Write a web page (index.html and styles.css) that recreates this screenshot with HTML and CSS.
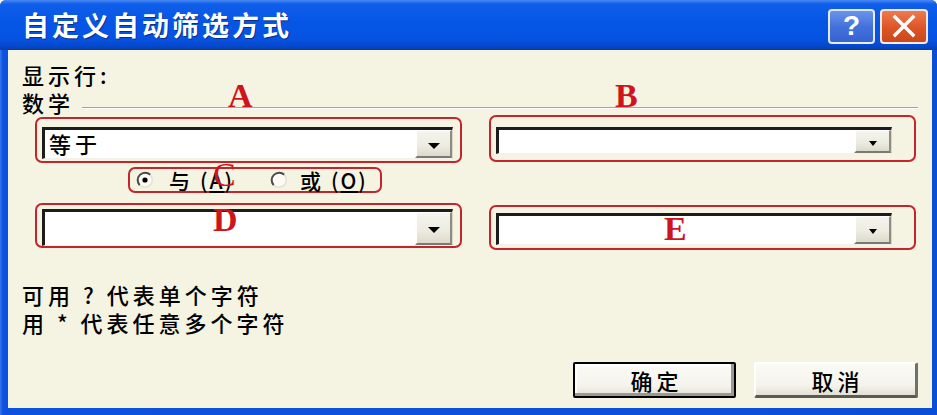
FILE: index.html
```html
<!DOCTYPE html>
<html lang="zh-CN">
<head>
<meta charset="utf-8">
<title>自定义自动筛选方式</title>
<link rel="stylesheet" href="styles.css">
</head>
<body>
<div class="window">
  <div class="titlebar">
    <span class="title">自定义自动筛选方式</span>
    <div class="tb-buttons">
      <span class="tb-btn help">?</span>
      <span class="tb-btn close">
        <svg width="26" height="24" viewBox="0 0 26 24"><path d="M4 3 L22 21 M22 3 L4 21" stroke="#fff" stroke-width="3.4" stroke-linecap="square"/></svg>
      </span>
    </div>
  </div>
  <div class="client">
    <div class="label">显示行:</div>
    <div class="field-row"><span>数学</span><span class="groove"></span></div>

    <div class="grid row1">
      <div class="redbox box-a">
        <div class="combo"><span class="val">等于</span><span class="drop"><i class="arrow"></i></span></div>
      </div>
      <div class="redbox box-b">
        <div class="combo combo-narrow"><span class="val"></span><span class="drop"><i class="arrow small"></i></span></div>
      </div>
    </div>

    <div class="redbox radios">
      <span class="opt">
        <svg class="radio-ico" width="18" height="18" viewBox="0 0 18 18"><circle cx="9" cy="9" r="7.5" fill="#fbfaf4"/><path d="M3.7 14.3 A7.5 7.5 0 0 1 14.3 3.7" stroke="#4a4a4a" stroke-width="2" fill="none"/><path d="M14.3 3.7 A7.5 7.5 0 0 1 3.7 14.3" stroke="#e4e2d2" stroke-width="1.5" fill="none"/><circle cx="9" cy="9" r="2.6" fill="#000"/></svg>
        <span class="opt-text">与</span><span class="mn">(<u>A</u>)</span>
      </span>
      <span class="opt opt2">
        <svg class="radio-ico" width="18" height="18" viewBox="0 0 18 18"><circle cx="9" cy="9" r="7.5" fill="#fbfaf4"/><path d="M3.7 14.3 A7.5 7.5 0 0 1 14.3 3.7" stroke="#4a4a4a" stroke-width="2" fill="none"/><path d="M14.3 3.7 A7.5 7.5 0 0 1 3.7 14.3" stroke="#e4e2d2" stroke-width="1.5" fill="none"/></svg>
        <span class="opt-text">或</span><span class="mn">(<u>O</u>)</span>
      </span>
    </div>

    <div class="grid row2">
      <div class="redbox box-d">
        <div class="combo combo-tall"><span class="val"></span><span class="drop"><i class="arrow"></i></span></div>
      </div>
      <div class="redbox box-e">
        <div class="combo combo-narrow"><span class="val"></span><span class="drop"><i class="arrow small"></i></span></div>
      </div>
    </div>

    <div class="hints">
      <p>可用 ? 代表单个字符</p>
      <p>用 * 代表任意多个字符</p>
    </div>

    <div class="actions">
      <button class="btn btn-default">确定</button>
      <button class="btn">取消</button>
    </div>
  </div>

  <span class="mark mark-a">A</span>
  <span class="mark mark-b">B</span>
  <span class="mark mark-c">C</span>
  <span class="mark mark-d">D</span>
  <span class="mark mark-e">E</span>
</div>
</body>
</html>
```
FILE: styles.css
```css
* { box-sizing: border-box; }

html, body {
  margin: 0;
  background: #ffffff;
}

body {
  width: 937px;
  height: 415px;
  overflow: hidden;
  font-family: "Noto Sans CJK SC", "Noto Sans", sans-serif;
}

.window {
  position: relative;
  width: 937px;
  height: 415px;
  display: flex;
  flex-direction: column;
  background: linear-gradient(90deg, #3a76ec 0, #0c52e0 3px, #0a4ed8 100%);
  border-radius: 6px 6px 0 0;
  overflow: hidden;
}

/* ---------- title bar ---------- */
.titlebar {
  height: 50px;
  flex: none;
  display: flex;
  align-items: center;
  justify-content: space-between;
  padding: 0 9px 0 22px;
  background: linear-gradient(180deg, #4a8af2 0, #0f5eea 8%, #0656e6 45%, #0552e0 80%, #0546c8 94%, #0a3aa6 100%);
}

.title {
  color: #ffffff;
  font-size: 27px;
  font-weight: 700;
  letter-spacing: 3px;
  line-height: 50px;
  text-shadow: 1px 1px 0 #0a2c8c;
}

.tb-buttons {
  display: flex;
  gap: 5px;
  margin-top: 2px;
}

.tb-btn {
  width: 47px;
  height: 35px;
  border: 2px solid rgba(255, 255, 255, 0.85);
  border-radius: 4px;
  display: flex;
  align-items: center;
  justify-content: center;
}

.help {
  background: linear-gradient(180deg, #6a94ea 0, #4472dc 50%, #3562d0 100%);
  color: #ffffff;
  font-family: "Liberation Sans", sans-serif;
  font-weight: 700;
  font-size: 28px;
  line-height: 1;
}

.close {
  background: linear-gradient(180deg, #ee7a4e 0, #dc5526 55%, #c9471d 100%);
  width: 48px;
}

/* ---------- client area ---------- */
.client {
  flex: 1;
  margin: 0 5px 7px 8px;
  background: #f5f3e1;
  display: flex;
  flex-direction: column;
  padding: 12px 14px 10px 14px;
  font-size: 22px;
  font-weight: 500;
  letter-spacing: 4px;
  line-height: 24px;
  color: #000000;
}

.field-row {
  display: flex;
  margin-top: 4px;
}

.groove {
  flex: 1;
  height: 2px;
  margin: 17px 0 0 8px;
  border-top: 1px solid #a6a596;
  border-bottom: 1px solid #ffffff;
}

.grid {
  display: grid;
  grid-template-columns: 427px 427px;
  column-gap: 27px;
  align-items: start;
  margin-left: 13px;
}

.row1 { margin-top: 3px; }
.row2 { margin-top: 10px; }

.redbox {
  border: 2px solid #c4242b;
  border-radius: 7px;
}

.box-a { padding: 8px 7px 2px 5px; }
.box-b { padding: 10px 22px 6px 5px; margin-top: -2px; }
.box-d { padding: 4px 7px 0 5px; }
.box-e { padding: 6px 22px 3px 5px; margin-top: 2px; }

.combo {
  height: 32px;
  display: flex;
  background: #ffffff;
  border-top: 3px solid #1c1c1c;
  border-left: 3px solid #1c1c1c;
  border-right: 1px solid #d8d6c8;
  border-bottom: 1px solid #f2f1ea;
}

.combo-narrow { height: 27px; }
.box-e .combo-narrow { height: 32px; }
.combo-tall { height: 37px; }

.val {
  flex: 1;
  padding-left: 4px;
  line-height: 27px;
}

.drop {
  width: 37px;
  flex: none;
  display: flex;
  align-items: center;
  justify-content: center;
  background: linear-gradient(180deg, #f6f5ee 0, #ecebe0 60%, #dcdacb 100%);
  border-left: 2px solid #ffffff;
  border-top: 1px solid #ffffff;
  border-right: 2px solid #8e8c80;
  border-bottom: 2px solid #7c7a70;
  padding-top: 4px;
}

.arrow {
  width: 0;
  height: 0;
  border-left: 6px solid transparent;
  border-right: 6px solid transparent;
  border-top: 6px solid #000000;
}

.arrow.small {
  border-left-width: 4px;
  border-right-width: 4px;
  border-top-width: 5px;
}

/* ---------- radios ---------- */
.radios {
  align-self: flex-start;
  width: 254px;
  height: 26px;
  margin: 4px 0 0 106px;
  display: flex;
  align-items: center;
  padding-left: 6px;
  line-height: 22px;
  font-size: 21px;
}

.opt {
  display: flex;
  align-items: center;
}

.opt2 { margin-left: 36px; }

.radio-ico { margin-right: 15px; flex: none; }
.opt2 .radio-ico { margin-right: 12px; }

.mn {
  margin-left: 6px;
  letter-spacing: 2px;
}

.mn u { text-underline-offset: 2px; }

/* ---------- hints ---------- */
.hints {
  margin-top: 30px;
  line-height: 28px;
}

.hints p { margin: 0; }

/* ---------- buttons ---------- */
.actions {
  margin-top: auto;
  display: flex;
  justify-content: flex-end;
  gap: 18px;
}

.btn {
  width: 164px;
  height: 36px;
  font-family: inherit;
  font-size: 22px;
  font-weight: 500;
  letter-spacing: 4px;
  padding: 0 0 0 4px;
  color: #000000;
  background: linear-gradient(180deg, #fbfbf6 0, #f4f3ec 70%, #e2e0d4 100%);
  border-style: solid;
  border-width: 2px 3px 3px 2px;
  border-color: #ffffff #707068 #5a5a54 #ffffff;
  border-radius: 2px;
}

.btn-default {
  width: 163px;
  border: 2px solid #000000;
  box-shadow: inset -3px -3px 0 #9c9a90, inset 2px 2px 0 #ffffff;
}

/* ---------- annotation letters ---------- */
.mark {
  position: absolute;
  font-family: "Liberation Serif", serif;
  font-weight: 700;
  font-size: 34px;
  line-height: 34px;
  color: #d0141c;
}

.mark-a { left: 228px; top: 79px; }
.mark-b { left: 615px; top: 79px; }
.mark-c { left: 213px; top: 158px; font-weight: 400; }
.mark-d { left: 213px; top: 203px; }
.mark-e { left: 664px; top: 212px; }
```
